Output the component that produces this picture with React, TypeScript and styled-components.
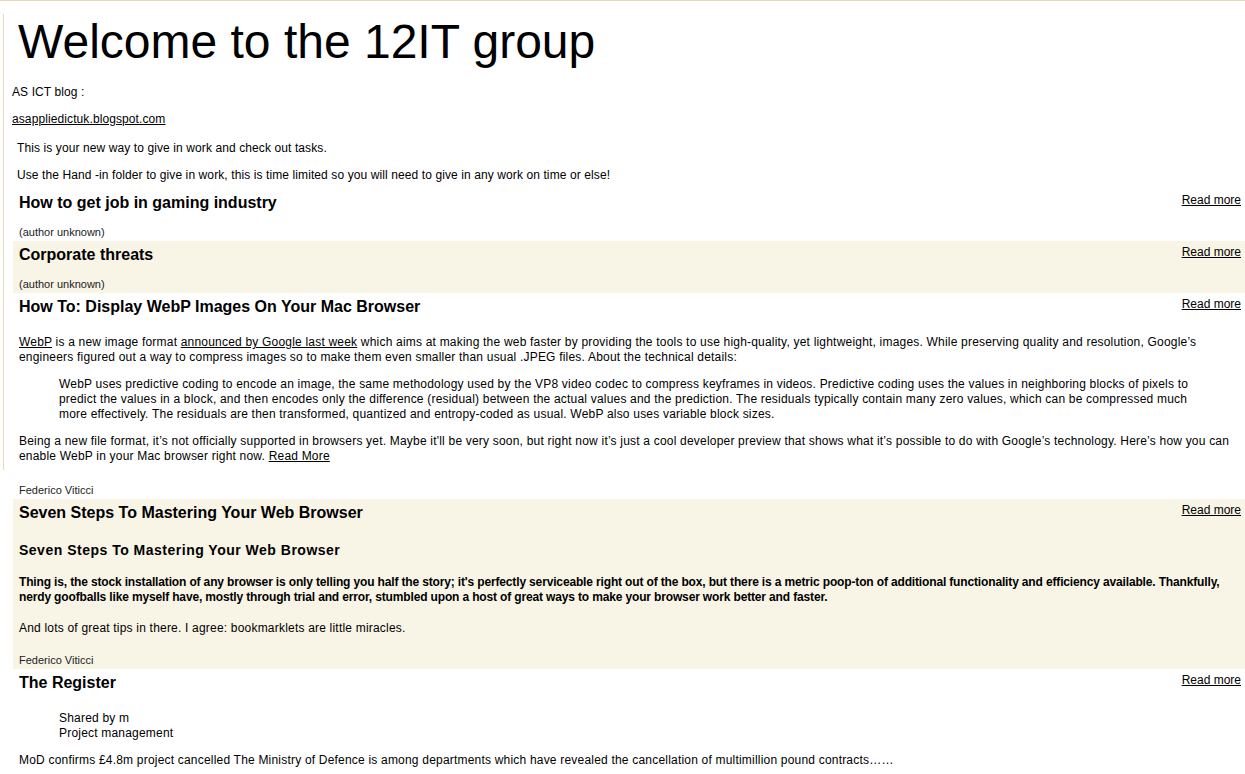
import styled, { createGlobalStyle } from 'styled-components';
import type { ReactNode } from 'react';

const GlobalStyle = createGlobalStyle`
  body {
    margin: 0;
    background: #ffffff;
    color: #000000;
    font-family: "Liberation Sans", Arial, sans-serif;
  }
  a {
    color: #000000;
    text-decoration: underline;
  }
`;

const Page = styled.div`
  border-top: 1px solid #e4dab3;
`;

// the ruled frame of the original stops part way down the feed
const Frame = styled.div`
  margin-left: 3px;
  border-left: 1px solid #e4dab3;
`;

const Rest = styled.div`
  margin-left: 4px;
`;

const Title = styled.h1`
  margin: 13px 0 15px 14px;
  font-size: 48px;
  font-weight: normal;
  line-height: 56px;
`;

const TextBlock = styled.div<{ $indent: number }>`
  padding-left: ${(props) => props.$indent}px;
  font-size: 12px;
  line-height: 15px;
  letter-spacing: 0.1px;
  p {
    margin: 12px 0;
  }
  p:first-child {
    margin-top: ${(props) => (props.$indent > 10 ? '14px' : '12px')};
  }
  p:last-child {
    margin-bottom: ${(props) => (props.$indent > 10 ? '6px' : '12px')};
  }
`;

const Feed = styled.div`
  margin-left: 9px;
  display: flex;
  flex-direction: column;
`;

const Item = styled.div<{ $shaded: boolean; $cut?: boolean }>`
  display: flex;
  flex-direction: column;
  padding: ${(props) => (props.$cut ? '4px 4px 0 6px' : '4px 4px 2px 6px')};
  background-color: ${(props) => (props.$shaded ? '#f8f4e6' : 'transparent')};
`;

const ItemHead = styled.div`
  display: flex;
  flex-direction: row;
  align-items: flex-start;
  justify-content: space-between;
`;

const ItemTitle = styled.h2`
  margin: 0;
  font-size: 16px;
  font-weight: 700;
  line-height: 19px;
`;

const ReadMore = styled.a`
  font-size: 12px;
  line-height: 15px;
`;

const Body = styled.div`
  padding-top: 7px;
  font-size: 12px;
  line-height: 15px;
  letter-spacing: 0.2px;
  p {
    margin: 12px 0;
  }
  blockquote {
    margin: 12px 40px;
  }
  h3 {
    margin: 13px 0 16px;
    font-size: 14px;
    font-weight: 700;
    line-height: 17px;
    letter-spacing: 0.5px;
  }
  .strong {
    margin-bottom: 16px;
    font-weight: 700;
    letter-spacing: -0.15px;
  }
  & > :last-child {
    margin-bottom: 6px;
  }
`;

const Author = styled.div<{ $gap: number }>`
  margin-top: ${(props) => props.$gap}px;
  font-size: 11px;
  line-height: 13px;
  color: #222222;
`;

const AuthorRow = styled.div`
  margin-left: 9px;
  padding: 0 4px 2px 6px;
`;

type Post = {
  title: string;
  author?: string;
  body?: ReactNode;
};

const posts: Post[] = [
  { title: 'How to get job in gaming industry', author: '(author unknown)' },
  { title: 'Corporate threats', author: '(author unknown)' },
  {
    title: 'How To: Display WebP Images On Your Mac Browser',
    author: 'Federico Viticci',
    body: (
      <>
        <p>
          <a href='#'>WebP</a> is a new image format <a href='#'>announced by Google last week</a> which
          aims at making the web faster by providing the tools to use high-quality, yet lightweight,
          images. While preserving quality and resolution, Google’s engineers figured out a way to
          compress images so to make them even smaller than usual .JPEG files. About the technical
          details:
        </p>
        <blockquote>
          WebP uses predictive coding to encode an image, the same methodology used by the VP8 video
          codec to compress keyframes in videos. Predictive coding uses the values in neighboring
          blocks of pixels to predict the values in a block, and then encodes only the difference
          (residual) between the actual values and the prediction. The residuals typically contain
          many zero values, which can be compressed much more effectively. The residuals are then
          transformed, quantized and entropy-coded as usual. WebP also uses variable block sizes.
        </blockquote>
        <p>
          Being a new file format, it’s not officially supported in browsers yet. Maybe it'll be very
          soon, but right now it’s just a cool developer preview that shows what it’s possible to do
          with Google’s technology. Here’s how you can enable WebP in your Mac browser right now.{' '}
          <a href='#'>Read More</a>
        </p>
      </>
    ),
  },
  {
    title: 'Seven Steps To Mastering Your Web Browser',
    author: 'Federico Viticci',
    body: (
      <>
        <h3>Seven Steps To Mastering Your Web Browser</h3>
        <p className='strong'>
          Thing is, the stock installation of any browser is only telling you half the story; it's
          perfectly serviceable right out of the box, but there is a metric poop-ton of additional
          functionality and efficiency available. Thankfully, nerdy goofballs like myself have, mostly
          through trial and error, stumbled upon a host of great ways to make your browser work better
          and faster.
        </p>
        <p>And lots of great tips in there. I agree: bookmarklets are little miracles.</p>
      </>
    ),
  },
  {
    title: 'The Register',
    body: (
      <>
        <blockquote>
          Shared by m
          <br />
          Project management
        </blockquote>
        <p>
          MoD confirms £4.8m project cancelled The Ministry of Defence is among departments which have
          revealed the cancellation of multimillion pound contracts……
        </p>
      </>
    ),
  },
];

// posts up to this index sit inside the ruled frame; its author line falls below the rule
const FRAME_END = 2;

function PostItem({ post, index, cut }: { post: Post; index: number; cut?: boolean }) {
  return (
    <Item $shaded={index % 2 === 1} $cut={cut}>
      <ItemHead>
        <ItemTitle>{post.title}</ItemTitle>
        <ReadMore href='#'>Read more</ReadMore>
      </ItemHead>
      {post.body && <Body>{post.body}</Body>}
      {post.author && !cut && <Author $gap={post.body ? 12 : 14}>{post.author}</Author>}
    </Item>
  );
}

function App() {
  const framed = posts.slice(0, FRAME_END + 1);
  const tail = posts.slice(FRAME_END + 1);
  const cutAuthor = posts[FRAME_END].author;

  return (
    <>
      <GlobalStyle />
      <Page>
        <Frame>
          <Title>Welcome to the 12IT group</Title>
          <TextBlock $indent={8}>
            <p>AS ICT blog :</p>
            <p>
              <a href='#'>asappliedictuk.blogspot.com</a>
            </p>
          </TextBlock>
          <TextBlock $indent={13}>
            <p>This is your new way to give in work and check out tasks.</p>
            <p>
              Use the Hand -in folder to give in work, this is time limited so you will need to give
              in any work on time or else!
            </p>
          </TextBlock>
          <Feed>
            {framed.map((post, i) => (
              <PostItem key={post.title} post={post} index={i} cut={i === FRAME_END} />
            ))}
          </Feed>
        </Frame>
        <Rest>
          <AuthorRow>
            <Author $gap={14}>{cutAuthor}</Author>
          </AuthorRow>
          <Feed>
            {tail.map((post, i) => (
              <PostItem key={post.title} post={post} index={i + FRAME_END + 1} />
            ))}
          </Feed>
        </Rest>
      </Page>
    </>
  );
}

export default App;
